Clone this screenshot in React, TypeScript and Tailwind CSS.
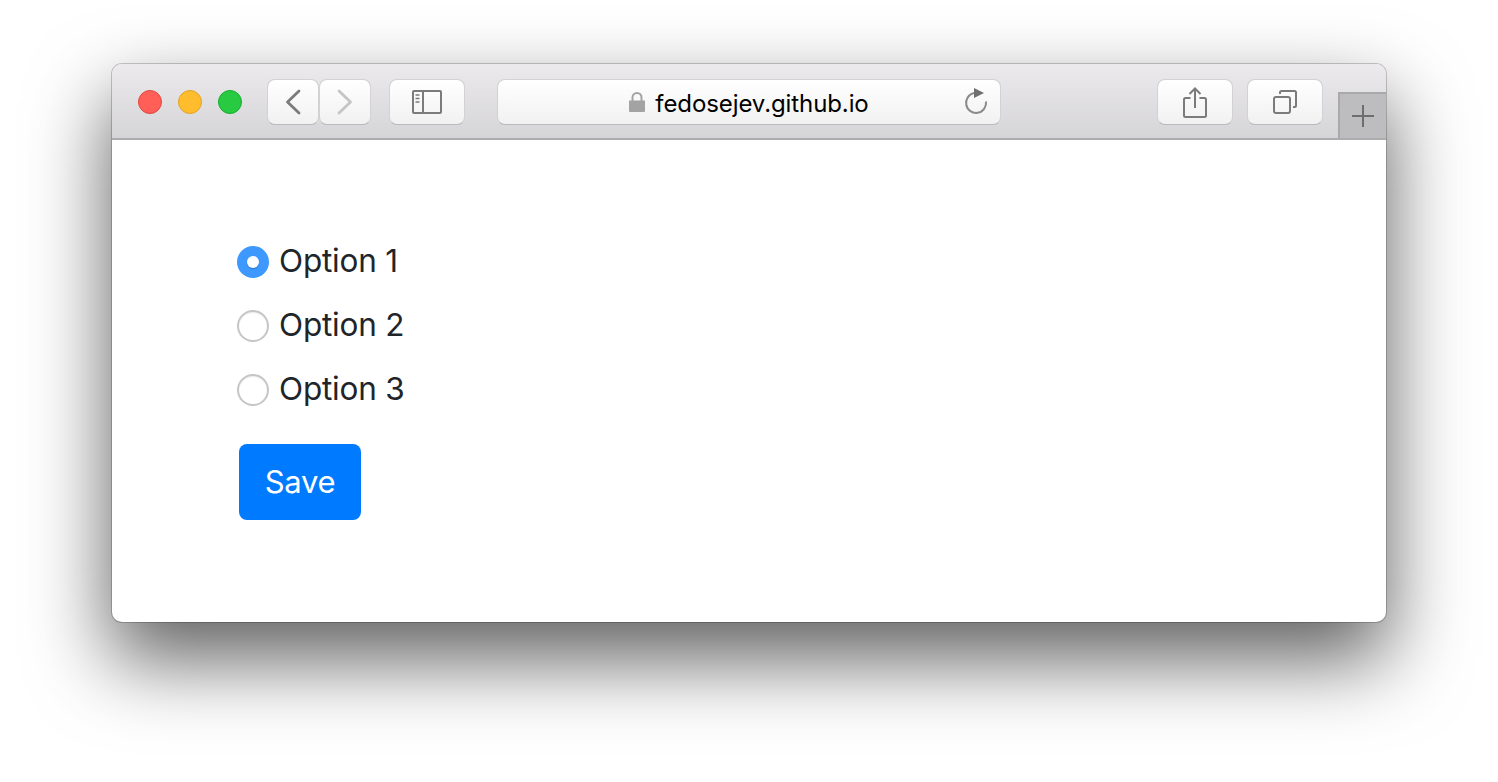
import React from 'react';

const font = 'font-["Inter","Liberation_Sans",sans-serif]';
const toolButton =
  'flex h-[46px] items-center justify-center rounded-[8px] border border-[#d2d1d3] border-b-[#b9b8ba] bg-gradient-to-b from-white to-[#f1f1f1]';

function TrafficLight({ className }: { className: string }) {
  return <div className={`h-6 w-6 rounded-full border ${className}`} />;
}

function Radio({ label, checked }: { label: string; checked?: boolean }) {
  return (
    <label className="flex h-8 items-center gap-[10px]">
      {checked ? (
        <span className="flex h-8 w-8 items-center justify-center rounded-full bg-[#3d99ff]">
          <span className="h-3 w-3 rounded-full bg-white shadow-[0_1px_1px_rgba(30,90,170,0.6)]" />
        </span>
      ) : (
        <span className="h-8 w-8 rounded-full border-2 border-[#c6c6c6] bg-white shadow-[inset_0_1px_1px_rgba(0,0,0,0.08)]" />
      )}
      <span className="-translate-y-px text-[31.5px] leading-8 tracking-[-0.2px] text-[#212529]">{label}</span>
    </label>
  );
}

export default function App() {
  return (
    <div className={`h-[782px] w-[1498px] overflow-hidden bg-white pl-[112px] pt-[64px] ${font}`}>
      <div className="h-[558px] w-[1274px] overflow-hidden rounded-[10px] bg-white shadow-[0_36px_80px_2px_rgba(0,0,0,0.62),0_0_0_1px_rgba(0,0,0,0.2)]">
        {/* Toolbar */}
        <div className="flex h-[76px] items-start border-b-2 border-[#acabad] bg-gradient-to-b from-[#eceaec] to-[#d5d4d6] pl-[26px] pt-[15px]">
          <div className="flex h-[46px] items-center gap-4">
            <TrafficLight className="border-[#e2463f] bg-[#ff5f57]" />
            <TrafficLight className="border-[#e1a325] bg-[#ffbd2e]" />
            <TrafficLight className="border-[#14ae2e] bg-[#28ca42]" />
          </div>

          <div className="ml-[25px] flex">
            <button className={`${toolButton} w-[52px]`}>
              <svg width="18" height="26" viewBox="0 0 18 26" fill="none" stroke="#7b7b7b" strokeWidth="2.8" strokeLinecap="round" strokeLinejoin="round">
                <path d="M15 2 3.500 13 15 24" />
              </svg>
            </button>
            <button className={`${toolButton} w-[52px]`}>
              <svg width="18" height="26" viewBox="0 0 18 26" fill="none" stroke="#c5c5c5" strokeWidth="2.8" strokeLinecap="round" strokeLinejoin="round">
                <path d="M3 2 14.500 13 3 24" />
              </svg>
            </button>
          </div>

          <button className={`${toolButton} ml-[18px] w-[76px]`}>
            <svg width="30" height="24" viewBox="0 0 30 24" fill="none" stroke="#7b7b7b" strokeWidth="2">
              <rect x="1" y="1" width="28" height="22" rx="1" />
              <path d="M11 1v22" />
              <path d="M3.500 5h4M3.500 8.500h4M3.500 12h4" strokeWidth="1.500" />
            </svg>
          </button>

          <div className={`${toolButton} relative ml-8 w-[504px]`}>
            <svg width="16" height="20" viewBox="0 0 16 20" fill="#a3a3a3" className="mr-[10px]">
              <path d="M0 8.500h16V19a1 1 0 0 1-1 1H1a1 1 0 0 1-1-1z" />
              <path d="M3.500 9V5.500a4.500 4.500 0 0 1 9 0V9" fill="none" stroke="#a3a3a3" strokeWidth="2" />
            </svg>
            <span className="pt-[3px] text-[24px] leading-none tracking-[-0.1px] text-black">fedosejev.github.io</span>
            <svg width="24" height="28" viewBox="0 0 24 28" fill="none" className="absolute right-[12px] top-[7px]">
              <path d="M10 6.100A10 10 0 1 0 22 14.500" stroke="#8a8a8a" strokeWidth="2" />
              <path d="M10 1 20 6 10 11z" fill="#6f6f6f" />
            </svg>
          </div>

          <button className={`${toolButton} ml-[156px] w-[76px]`}>
            <svg width="24" height="31" viewBox="0 0 24 31" fill="none" stroke="#7b7b7b" strokeWidth="2">
              <path d="M7.500 11H2.500A1.500 1.500 0 0 0 1 12.500v16A1.500 1.500 0 0 0 2.500 30h19a1.500 1.500 0 0 0 1.500-1.500v-16a1.500 1.500 0 0 0-1.500-1.500h-5" />
              <path d="M12 21V2M6.500 7 12 1.500 17.500 7" />
            </svg>
          </button>

          <button className={`${toolButton} ml-[14px] w-[76px]`}>
            <svg width="24" height="24" viewBox="0 0 24 24" fill="none" stroke="#7b7b7b" strokeWidth="2">
              <rect x="1" y="7" width="16" height="16" rx="2" />
              <path d="M7 4V2.500A1.500 1.500 0 0 1 8.500 1h13A1.500 1.500 0 0 1 23 2.500v13a1.500 1.500 0 0 1-1.500 1.500H20" />
            </svg>
          </button>

          {/* New tab */}
          <div className="ml-[15px] flex h-[46px] w-[48px] items-center justify-center self-end border-l-2 border-t-2 border-[#a9a8aa] bg-[#bdbcbe]">
            <svg width="24" height="24" viewBox="0 0 24 24" stroke="#6d6d6d" strokeWidth="2">
              <path d="M1 12h22M12 1v22" />
            </svg>
          </div>
        </div>

        {/* Form */}
        <div className="pl-[125px] pt-[106px]">
          <div className="flex flex-col gap-8">
            <Radio label="Option 1" checked />
            <Radio label="Option 2" />
            <Radio label="Option 3" />
          </div>
          <button className="ml-[2px] mt-[38px] h-[76px] w-[122px] rounded-lg bg-[#007bff] text-[31px] tracking-[-0.3px] text-white">
            Save
          </button>
        </div>
      </div>
    </div>
  );
}
